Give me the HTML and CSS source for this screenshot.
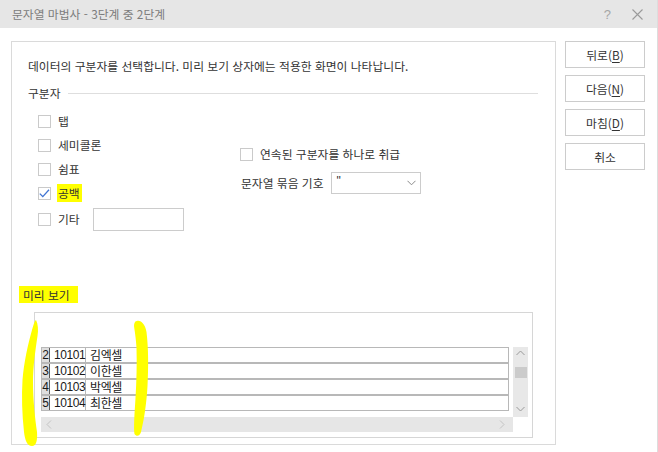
FILE: index.html
```html
<!DOCTYPE html>
<html lang="ko">
<head>
<meta charset="utf-8">
<title>문자열 마법사</title>
<link rel="stylesheet" href="styles.css">
</head>
<body>
<div class="window">
  <div class="titlebar">
    <span class="title">문자열 마법사 - 3단계 중 2단계</span>
    <span class="tb-help">?</span>
    <svg class="tb-close" width="11" height="11" viewBox="0 0 11 11"><path d="M0.5 0.5 L10.5 10.5 M10.5 0.5 L0.5 10.5" stroke="#9a9a9a" stroke-width="1.1" fill="none"/></svg>
  </div>
  <div class="main">
    <div class="panel">
      <div class="intro">데이터의 구분자를 선택합니다. 미리 보기 상자에는 적용한 화면이 나타납니다.</div>
      <div class="group-head"><span>구분자</span><span class="rule"></span></div>
      <div class="sep-area">
        <div class="sep-left">
          <div class="opt"><span class="cb"></span><span class="lbl">탭</span></div>
          <div class="opt"><span class="cb"></span><span class="lbl">세미콜론</span></div>
          <div class="opt"><span class="cb"></span><span class="lbl">쉼표</span></div>
          <div class="opt"><span class="cb"><svg width="13" height="13" viewBox="0 0 13 13"><path d="M1.8 6.6 L4.8 9.6 L11 2.8" stroke="#3f74d3" stroke-width="1.3" fill="none"/></svg></span><span class="lbl hl">공백</span></div>
          <div class="opt opt-other"><span class="cb"></span><span class="lbl">기타</span><span class="textbox"></span></div>
        </div>
        <div class="sep-right">
          <div class="opt"><span class="cb"></span><span class="lbl">연속된 구분자를 하나로 취급</span></div>
          <div class="opt opt-quote"><span class="qlbl">문자열 묶음 기호</span><span class="select"><span class="sel-val">"</span><svg width="9" height="6" viewBox="0 0 9 6"><path d="M0.5 0.8 L4.5 4.8 L8.5 0.8" stroke="#8a8a8a" stroke-width="1" fill="none"/></svg></span></div>
        </div>
      </div>
      <div class="pv-label"><span class="pv-hl">미리 보기</span></div>
      <div class="preview">
        <div class="pv-grid">
          <div class="rows">
            <div class="row"><span class="num">2</span><span class="id">10101</span><span class="name">김엑셀</span></div>
            <div class="row"><span class="num">3</span><span class="id">10102</span><span class="name">이한셀</span></div>
            <div class="row"><span class="num">4</span><span class="id">10103</span><span class="name">박엑셀</span></div>
            <div class="row"><span class="num">5</span><span class="id">10104</span><span class="name">최한셀</span></div>
          </div>
          <div class="vscroll">
            <svg width="15" height="10" viewBox="0 0 15 10"><path d="M3.5 7 L7.5 3 L11.5 7" stroke="#9a9a9a" stroke-width="1" fill="none"/></svg>
            <span class="thumb"></span>
            <span class="vspace"></span>
            <svg width="15" height="10" viewBox="0 0 15 10"><path d="M3.5 3 L7.5 7 L11.5 3" stroke="#9a9a9a" stroke-width="1" fill="none"/></svg>
          </div>
          <div class="hscroll">
            <svg width="14" height="15" viewBox="0 0 14 15"><path d="M9 3.5 L5 7.5 L9 11.5" stroke="#c4c4c4" stroke-width="1" fill="none"/></svg>
            <svg width="14" height="15" viewBox="0 0 14 15"><path d="M5 3.5 L9 7.5 L5 11.5" stroke="#c4c4c4" stroke-width="1" fill="none"/></svg>
          </div>
        </div>
      </div>
    </div>
    <div class="buttons">
      <div class="btn">뒤로(<u>B</u>)</div>
      <div class="btn">다음(<u>N</u>)</div>
      <div class="btn">마침(<u>D</u>)</div>
      <div class="btn">취소</div>
    </div>
  </div>
  <svg class="marks" width="658" height="452" viewBox="0 0 658 452">
    <path d="M36 320 C38 324 38.5 330 37.5 336 C35.5 350 33 366 33 382 C33 400 35 418 37 432 C37.5 440 36.5 446 32 446 C27 446 25 440 24 432 C22 414 21.5 396 22.5 380 C24 362 28 344 32 330 C33.5 325 34.5 321 36 320 Z" fill="#ffff00"/>
    <path d="M137 321 C141 320 145 324 146.5 332 C148.5 348 148.5 368 147.5 386 C146.5 404 144 420 141 432 C140 436 136.5 437 134.5 434 C133.5 428 134.5 414 135.5 398 C136.5 382 137 364 136.5 348 C136 338 134.5 330 134 326 C134 323 135 321 137 321 Z" fill="#ffff00"/>
  </svg>
</div>
</body>
</html>
```
FILE: styles.css
```css
* { box-sizing: border-box; }
html, body { margin: 0; padding: 0; }
body {
  width: 658px;
  height: 452px;
  overflow: hidden;
  background: #ffffff;
  font-family: "Noto Sans CJK KR", "Noto Sans", sans-serif;
  font-size: 11.8px;
  color: #333333;
}
.window {
  position: relative;
  width: 658px;
  height: 452px;
  border-right: 1px solid #dddddd;
}
.titlebar {
  height: 28px;
  background: #e6e6e6;
  display: flex;
  align-items: center;
  padding-left: 12px;
}
.title { color: #7c7c7c; line-height: 16px; flex: 1; }
.tb-help { color: #a5a5a5; font-family: "Liberation Sans", sans-serif; font-size: 13px; margin-right: 21px; }
.tb-close { margin-right: 14px; }

.main {
  display: flex;
  padding: 13px 0 0 11px;
}
.panel {
  width: 545px;
  height: 404px;
  border: 1px solid #dadada;
  display: flex;
  flex-direction: column;
}
.intro {
  margin-top: 16px;
  padding-left: 16px;
  line-height: 16px;
}
.group-head {
  margin-top: 11px;
  padding-left: 16px;
  padding-right: 17px;
  display: flex;
  align-items: center;
  line-height: 16px;
}
.rule {
  flex: 1;
  height: 1px;
  background: #dedede;
  margin-left: 7px;
  margin-top: 1px;
}
.sep-area {
  display: flex;
  margin-top: 8px;
  padding-left: 26px;
}
.sep-left {
  width: 202px;
  display: flex;
  flex-direction: column;
}
.opt {
  height: 24px;
  display: flex;
  align-items: center;
}
.opt-other { height: 28px; }
.cb {
  width: 13px;
  height: 13px;
  border: 1px solid #cacaca;
  background: #fff;
  position: relative;
  flex: none;
}
.cb svg { position: absolute; left: -1px; top: -1px; }
.lbl { margin-left: 7px; line-height: 18px; }
.hl { background: #ffff00; padding: 0 2px 0 1px; margin-left: 6px; }
.textbox {
  width: 91px;
  height: 23px;
  border: 1px solid #cccccc;
  margin-left: 13px;
}
.sep-right {
  display: flex;
  flex-direction: column;
  gap: 5px;
  margin-top: 33px;
}
.opt-quote { padding-left: 1px; }
.qlbl { line-height: 16px; }
.select {
  margin-left: 7px;
  width: 90px;
  height: 22px;
  border: 1px solid #cccccc;
  display: flex;
  align-items: center;
  justify-content: space-between;
  padding: 0 4px 0 5px;
}
.sel-val { font-family: "Liberation Sans", sans-serif; font-size: 12px; color: #333; margin-top: -4px; }

.pv-label {
  margin-top: 53px;
  padding-left: 7px;
  height: 17px;
  display: flex;
}
.pv-hl {
  background: #ffff00;
  padding: 0 8px 0 4px;
  line-height: 17px;
}
.preview {
  margin: 9px 22px 0 22px;
  height: 126px;
  border: 1px solid #d6d6d6;
  padding: 34px 0 0 6px;
}
.pv-grid {
  display: grid;
  grid-template-columns: 468px 4px 15px;
  grid-template-rows: 70px 15px;
}
.rows { grid-column: 1; grid-row: 1; }
.row {
  height: 16px;
  border: 1px solid #b8b8b8;
  display: flex;
  align-items: stretch;
  color: #1a1a1a;
  font-size: 12px;
  line-height: 14px;
  overflow: hidden;
}
.num {
  width: 9px;
  margin: -1px 0 -1px -1px;
  border: 1px solid #5a5a5a;
  background: #dedede;
  font-family: "Liberation Sans", sans-serif;
  font-size: 12px;
  text-align: center;
  line-height: 14px;
}
.id {
  width: 36px;
  border-right: 1px solid #b8b8b8;
  padding-left: 4px;
  font-family: "Liberation Sans", sans-serif;
  letter-spacing: -0.4px;
}
.name { padding-left: 4px; letter-spacing: -0.4px; }
.vscroll {
  grid-column: 3;
  grid-row: 1;
  background: #e8e8e8;
  display: flex;
  flex-direction: column;
  align-items: center;
  padding-top: 1px;
}
.thumb {
  width: 12px;
  height: 11px;
  background: #cbcbcb;
  margin-top: 9px;
}
.vspace { flex: 1; }
.vscroll svg:last-child { margin-bottom: 3px; }
.hscroll {
  grid-column: 1 / 3;
  grid-row: 2;
  background: #e6e6e6;
  display: flex;
  justify-content: space-between;
  align-items: center;
  padding: 0 4px 0 1px;
}

.buttons {
  margin-left: 9px;
  display: flex;
  flex-direction: column;
  gap: 7px;
}
.btn {
  width: 80px;
  height: 27px;
  border: 1px solid #cccccc;
  background: #ffffff;
  display: flex;
  align-items: center;
  justify-content: center;
  line-height: 16px;
}
.btn u { text-underline-offset: 2px; }

.marks {
  position: absolute;
  left: 0;
  top: 0;
  pointer-events: none;
}
```
